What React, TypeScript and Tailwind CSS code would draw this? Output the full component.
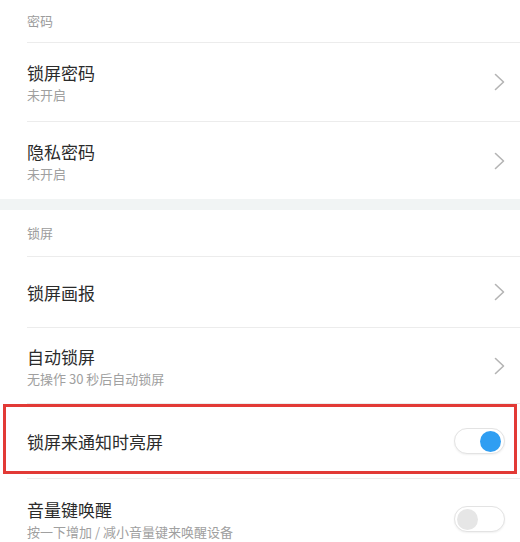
import type { ReactNode } from "react";

const FONT = { fontFamily: '"Noto Sans CJK SC", "Noto Sans", sans-serif' };

function Chevron() {
  return (
    <svg width="11" height="18" viewBox="0 0 11 18" fill="none" className="shrink-0">
      <polyline points="1.5,1.5 9.5,9 1.5,16.5" stroke="#b4b4b4" strokeWidth="1.6" strokeLinecap="round" strokeLinejoin="round" />
    </svg>
  );
}

function Toggle({ on }: { on: boolean }) {
  return (
    <div className="relative w-[51px] h-[26px] rounded-full border border-[#e3e3e3] bg-white shadow-[0_1px_2px_rgba(0,0,0,0.06)] shrink-0">
      <span
        className={`absolute top-[2px] w-[21px] h-[21px] rounded-full ${
          on ? "right-[3px] bg-[#2f9ef2]" : "left-[2px] bg-[#e6e6e6]"
        }`}
      />
    </div>
  );
}

function Header({ title, height }: { title: string; height: string }) {
  return (
    <div className={`${height} flex items-center pl-[27px] text-[13px] text-[#9c9c9c]`}>{title}</div>
  );
}

type RowProps = {
  title: string;
  sub?: string;
  height: string;
  right: ReactNode;
  highlight?: boolean;
};

function Row({ title, sub, height, right, highlight }: RowProps) {
  return (
    <div className="relative">
      <div className={`${height} ml-[27px] border-t border-[#ececec] flex items-center justify-between pr-[15px]`}>
        <div className="flex flex-col">
          <span className="text-[17px] leading-[25px] text-[#2b2b2b]">{title}</span>
          {sub && <span className="text-[13px] leading-[19px] text-[#a0a0a0]">{sub}</span>}
        </div>
        {right}
      </div>
      {highlight && (
        <span className="absolute left-[3px] right-[3px] top-[1px] bottom-[4px] border-[3px] border-[#e23a36] pointer-events-none" />
      )}
    </div>
  );
}

export default function App() {
  return (
    <div className="w-[520px] h-[542px] overflow-hidden bg-white" style={FONT}>
      {/* 密码 */}
      <Header title="密码" height="h-[42px]" />
      <Row title="锁屏密码" sub="未开启" height="h-[79px]" right={<Chevron />} />
      <Row title="隐私密码" sub="未开启" height="h-[78px]" right={<Chevron />} />

      <div className="h-[11px] bg-[#f1f4f4]" />

      {/* 锁屏 */}
      <Header title="锁屏" height="h-[46px]" />
      <Row title="锁屏画报" height="h-[71px]" right={<Chevron />} />
      <Row title="自动锁屏" sub="无操作 30 秒后自动锁屏" height="h-[76px]" right={<Chevron />} />
      <Row title="锁屏来通知时亮屏" height="h-[75px]" right={<Toggle on />} highlight />
      <Row title="音量键唤醒" sub="按一下增加 / 减小音量键来唤醒设备" height="h-[80px]" right={<Toggle on={false} />} />
    </div>
  );
}
